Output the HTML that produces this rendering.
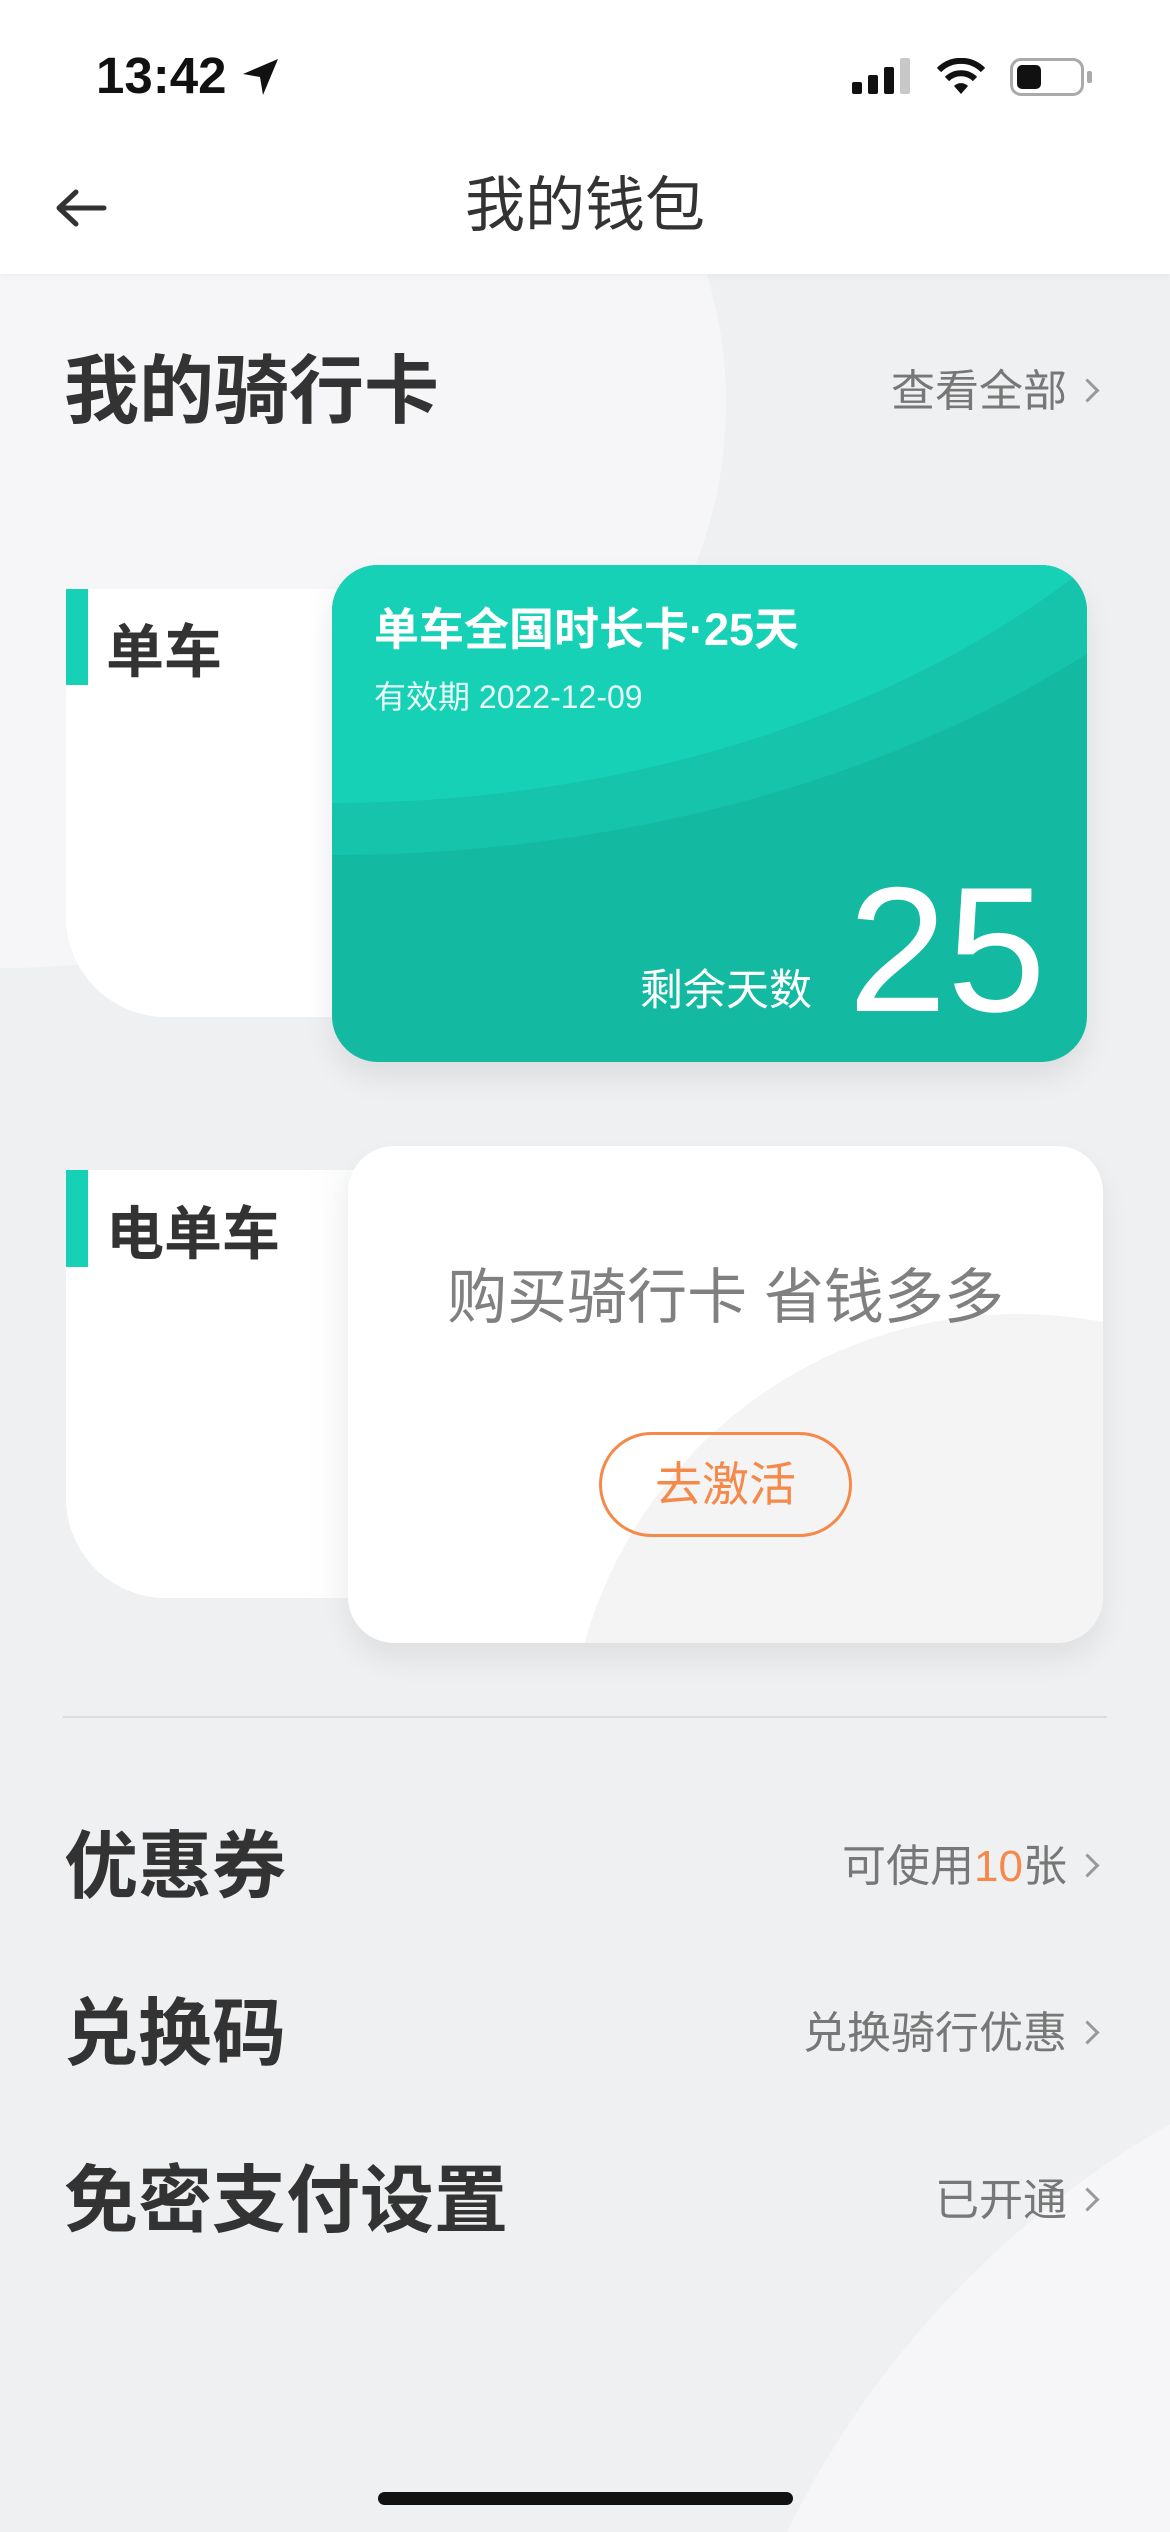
<!DOCTYPE html>
<html><head><meta charset="utf-8">
<style>
*{margin:0;padding:0;box-sizing:border-box}
html,body{width:1170px;height:2532px;overflow:hidden}
body{background:#eff0f2;font-family:"Liberation Sans","Noto Sans CJK SC",sans-serif}
#wrap{position:relative;width:1170px;height:2532px;overflow:hidden;background:#eff0f2}
.abs{position:absolute}
.big{font-weight:bold;color:#333;font-size:75px;line-height:1;white-space:nowrap}
.rt{color:#777;font-size:44px;line-height:1;white-space:nowrap;right:74px;text-align:right}
.chev{display:inline-block;width:17px;height:17px;border-top:3px solid #999;border-right:3px solid #999;transform:rotate(45deg);margin-left:12px;vertical-align:middle;position:relative;top:-4px}
</style></head><body><div id="wrap">
<div class="abs" style="left:-726px;top:-162px;width:1452px;height:1130px;border-radius:50%;background:#f6f6f8"></div>
<div class="abs" style="left:690px;top:2000px;width:1900px;height:1900px;border-radius:50%;background:#f6f6f8"></div>

<div class="abs" style="left:0;top:0;width:1170px;height:274px;background:#fff;box-shadow:0 2px 6px rgba(0,0,0,0.04)"></div>
<div class="abs" style="left:96px;top:50px;font-size:51px;font-weight:bold;color:#111;line-height:1">13:42</div>
<svg class="abs" style="left:240px;top:56px" width="42" height="42" viewBox="0 0 42 42"><path d="M38 3 L3 18 L20 21 L23 39 Z" fill="#111"/></svg>
<svg class="abs" style="left:852px;top:58px" width="62" height="36" viewBox="0 0 62 36"><rect x="0" y="24" width="10" height="12" rx="2" fill="#111"/><rect x="16" y="17" width="10" height="19" rx="2" fill="#111"/><rect x="32" y="9" width="10" height="27" rx="2" fill="#111"/><rect x="48" y="0" width="10" height="36" rx="2" fill="#c8c8c8"/></svg>
<svg class="abs" style="left:935px;top:58px" width="52" height="38" viewBox="0 0 52 38"><path d="M26 36 L19 28 A10 10 0 0 1 33 28 Z" fill="#111"/><path d="M12 21 A20 20 0 0 1 40 21" stroke="#111" stroke-width="6" fill="none"/><path d="M4 12 A31 31 0 0 1 48 12" stroke="#111" stroke-width="6" fill="none"/></svg>
<div class="abs" style="left:1010px;top:58px;width:74px;height:38px;border:3px solid #aaa;border-radius:11px"></div>
<div class="abs" style="left:1017px;top:65px;width:24px;height:24px;background:#111;border-radius:5px"></div>
<div class="abs" style="left:1087px;top:71px;width:5px;height:12px;background:#aaa;border-radius:2px"></div>

<svg class="abs" style="left:54px;top:188px" width="54" height="40" viewBox="0 0 54 40"><path d="M50 20 H6 M22 4 L5 20 L22 36" stroke="#333" stroke-width="5" fill="none" stroke-linecap="round" stroke-linejoin="round"/></svg>
<div class="abs" style="left:0;width:1170px;top:176px;text-align:center;font-size:60px;color:#333;line-height:1">我的钱包</div>

<div class="abs big" style="left:64px;top:354px">我的骑行卡</div>
<div class="abs rt" style="top:370px">查看全部<span class="chev"></span></div>

<div class="abs" style="left:66px;top:589px;width:400px;height:428px;background:linear-gradient(90deg,#fff 60%,#eef0f2);border-radius:0 0 0 100px"></div>
<div class="abs" style="left:66px;top:589px;width:22px;height:96px;background:#16d1b5"></div>
<div class="abs big" style="left:106px;top:624px;font-size:58px">单车</div>
<div class="abs" style="left:332px;top:565px;width:755px;height:497px;border-radius:46px;overflow:hidden;background:#14b9a1;box-shadow:0 16px 30px rgba(0,0,0,0.08)">
  <div class="abs" style="left:-1100px;top:-1186px;width:2200px;height:1476px;border-radius:50%;background:#15c4aa"></div>
  <div class="abs" style="left:-1000px;top:-1134px;width:2000px;height:1372px;border-radius:50%;background:#16d1b5"></div>
  <div class="abs" style="left:42px;top:42px;color:#fff;font-weight:bold;font-size:45px;line-height:1;white-space:nowrap">单车全国时长卡·25天</div>
  <div class="abs" style="left:42px;top:116px;color:#e8fbf7;font-size:32px;line-height:1;white-space:nowrap">有效期 2022-12-09</div>
  <div class="abs" style="left:308px;top:405px;color:#fff;font-size:43px;line-height:1;white-space:nowrap">剩余天数</div>
  <div class="abs" style="left:516px;top:296px;color:#fff;font-size:178px;line-height:1;white-space:nowrap;font-weight:300">25</div>
</div>

<div class="abs" style="left:66px;top:1170px;width:400px;height:428px;background:linear-gradient(90deg,#fff 60%,#eef0f2);border-radius:0 0 0 100px"></div>
<div class="abs" style="left:66px;top:1170px;width:22px;height:97px;background:#16d1b5"></div>
<div class="abs big" style="left:106px;top:1206px;font-size:58px">电单车</div>
<div class="abs" style="left:348px;top:1146px;width:755px;height:497px;border-radius:46px;overflow:hidden;background:#fff;box-shadow:0 16px 30px rgba(0,0,0,0.07)">
  <div class="abs" style="left:220px;top:168px;width:900px;height:900px;border-radius:50%;background:#f4f4f5"></div>
  <div class="abs" style="left:0;width:755px;top:122px;text-align:center;color:#808080;font-size:60px;line-height:1;white-space:nowrap">购买骑行卡 省钱多多</div>
  <div class="abs" style="left:251px;top:286px;width:253px;height:105px;border:3px solid #f5894a;border-radius:53px;text-align:center;line-height:99px;color:#f5894a;font-size:47px">去激活</div>
</div>

<div class="abs" style="left:63px;top:1716px;width:1044px;height:2px;background:#dcdde0"></div>

<div class="abs big" style="left:64px;top:1830px;font-size:74px">优惠券</div>
<div class="abs rt" style="top:1845px">可使用<span style="color:#f5894a">10</span>张<span class="chev"></span></div>
<div class="abs big" style="left:64px;top:1997px;font-size:74px">兑换码</div>
<div class="abs rt" style="top:2012px">兑换骑行优惠<span class="chev"></span></div>
<div class="abs big" style="left:64px;top:2164px;font-size:74px">免密支付设置</div>
<div class="abs rt" style="top:2179px">已开通<span class="chev"></span></div>

<div class="abs" style="left:378px;top:2492px;width:415px;height:13px;border-radius:7px;background:#111"></div>
</div></body></html>
